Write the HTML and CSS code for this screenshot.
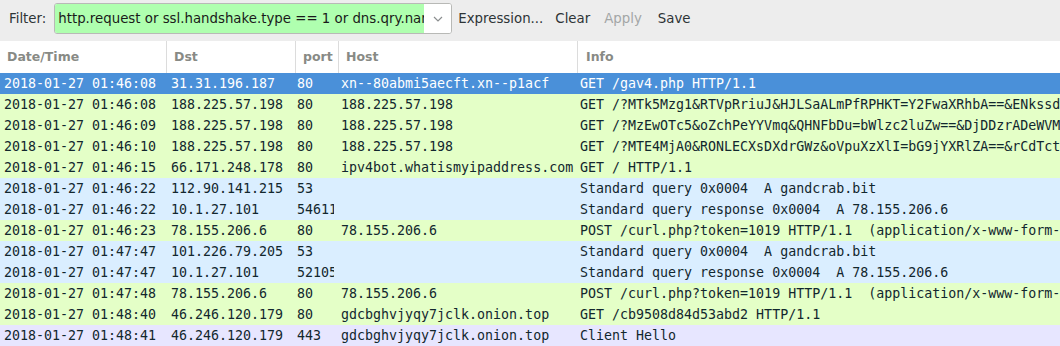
FILE: index.html
```html
<!DOCTYPE html>
<html>
<head>
<meta charset="utf-8">
<link rel="stylesheet" href="styles.css">
</head>
<body>
<div class="toolbar">
  <span class="label">Filter:</span>
  <div class="combo">
    <div class="combo-input">http.request or ssl.handshake.type == 1 or dns.qry.name</div>
    <div class="combo-btn">
      <svg width="10" height="6" viewBox="0 0 10 6"><path d="M1 1 L5 5 L9 1" fill="none" stroke="#8b8e8f" stroke-width="1.2"/></svg>
    </div>
  </div>
  <span class="tbtn b-expr">Expression...</span>
  <span class="tbtn b-clear">Clear</span>
  <span class="tbtn b-apply disabled">Apply</span>
  <span class="tbtn b-save">Save</span>
</div>
<div class="list">
  <div class="header">
    <div class="hc c-date">Date/Time</div>
    <div class="hc c-dst">Dst</div>
    <div class="hc c-port">port</div>
    <div class="hc c-host">Host</div>
    <div class="hc c-info">Info</div>
  </div>
  <div class="row sel"><div class="c c-date">2018-01-27 01:46:08</div><div class="c c-dst">31.31.196.187</div><div class="c c-port">80</div><div class="c c-host">xn--80abmi5aecft.xn--p1acf</div><div class="c c-info">GET /gav4.php HTTP/1.1</div></div>
  <div class="row http"><div class="c c-date">2018-01-27 01:46:08</div><div class="c c-dst">188.225.57.198</div><div class="c c-port">80</div><div class="c c-host">188.225.57.198</div><div class="c c-info">GET /?MTk5Mzg1&amp;RTVpRriuJ&amp;HJLSaALmPfRPHKT=Y2FwaXRhbA==&amp;ENkssdHdN</div></div>
  <div class="row http"><div class="c c-date">2018-01-27 01:46:09</div><div class="c c-dst">188.225.57.198</div><div class="c c-port">80</div><div class="c c-host">188.225.57.198</div><div class="c c-info">GET /?MzEwOTc5&amp;oZchPeYYVmq&amp;QHNFbDu=bWlzc2luZw==&amp;DjDDzrADeWVMxQ</div></div>
  <div class="row http"><div class="c c-date">2018-01-27 01:46:10</div><div class="c c-dst">188.225.57.198</div><div class="c c-port">80</div><div class="c c-host">188.225.57.198</div><div class="c c-info">GET /?MTE4MjA0&amp;RONLECXsDXdrGWz&amp;oVpuXzXlI=bG9jYXRlZA==&amp;rCdTctvBj</div></div>
  <div class="row http"><div class="c c-date">2018-01-27 01:46:15</div><div class="c c-dst">66.171.248.178</div><div class="c c-port">80</div><div class="c c-host">ipv4bot.whatismyipaddress.com</div><div class="c c-info">GET / HTTP/1.1</div></div>
  <div class="row udp"><div class="c c-date">2018-01-27 01:46:22</div><div class="c c-dst">112.90.141.215</div><div class="c c-port">53</div><div class="c c-host"></div><div class="c c-info">Standard query 0x0004  A gandcrab.bit</div></div>
  <div class="row udp"><div class="c c-date">2018-01-27 01:46:22</div><div class="c c-dst">10.1.27.101</div><div class="c c-port">54611</div><div class="c c-host"></div><div class="c c-info">Standard query response 0x0004  A 78.155.206.6</div></div>
  <div class="row http"><div class="c c-date">2018-01-27 01:46:23</div><div class="c c-dst">78.155.206.6</div><div class="c c-port">80</div><div class="c c-host">78.155.206.6</div><div class="c c-info">POST /curl.php?token=1019 HTTP/1.1  (application/x-www-form-urlencoded)</div></div>
  <div class="row udp"><div class="c c-date">2018-01-27 01:47:47</div><div class="c c-dst">101.226.79.205</div><div class="c c-port">53</div><div class="c c-host"></div><div class="c c-info">Standard query 0x0004  A gandcrab.bit</div></div>
  <div class="row udp"><div class="c c-date">2018-01-27 01:47:47</div><div class="c c-dst">10.1.27.101</div><div class="c c-port">52105</div><div class="c c-host"></div><div class="c c-info">Standard query response 0x0004  A 78.155.206.6</div></div>
  <div class="row http"><div class="c c-date">2018-01-27 01:47:48</div><div class="c c-dst">78.155.206.6</div><div class="c c-port">80</div><div class="c c-host">78.155.206.6</div><div class="c c-info">POST /curl.php?token=1019 HTTP/1.1  (application/x-www-form-urlencoded)</div></div>
  <div class="row http"><div class="c c-date">2018-01-27 01:48:40</div><div class="c c-dst">46.246.120.179</div><div class="c c-port">80</div><div class="c c-host">gdcbghvjyqy7jclk.onion.top</div><div class="c c-info">GET /cb9508d84d53abd2 HTTP/1.1</div></div>
  <div class="row tcp"><div class="c c-date">2018-01-27 01:48:41</div><div class="c c-dst">46.246.120.179</div><div class="c c-port">443</div><div class="c c-host">gdcbghvjyqy7jclk.onion.top</div><div class="c c-info">Client Hello</div></div>
</div>
</body>
</html>
```
FILE: styles.css
```css
html, body {
  margin: 0;
  padding: 0;
  background: #ffffff;
  overflow: hidden;
}
body {
  width: 1060px;
  height: 346px;
  font-family: "DejaVu Sans", sans-serif;
  font-size: 13.33px;
  color: #2e3436;
}
.toolbar {
  height: 41px;
  box-sizing: border-box;
  background: #ededed;
  display: flex;
  align-items: flex-start;
  padding: 3px 0 0 9px;
}
.label {
  line-height: 31px;
}
.combo {
  margin-left: 8px;
  width: 398px;
  height: 31px;
  box-sizing: border-box;
  border: 1px solid #b8b9b6;
  border-radius: 3px;
  display: flex;
  overflow: hidden;
  background: #fff;
}
.combo-input {
  width: 369px;
  background: #afffaf;
  line-height: 29px;
  padding-left: 3px;
  box-sizing: border-box;
  white-space: nowrap;
  overflow: hidden;
  color: #1a1a1a;
}
.combo-btn {
  flex: 1;
  display: flex;
  align-items: center;
  justify-content: center;
  background: #ffffff;
}
.tbtn {
  line-height: 31px;
  color: #2e3436;
}
.b-expr { margin-left: 6px; }
.b-clear { margin-left: 12px; }
.b-apply { margin-left: 14px; }
.b-save { margin-left: 16px; }
.disabled { color: #a3a6a6; }

.list {
  background: #fff;
}
.header {
  height: 32px;
  display: flex;
  background: #fff;
}
.hc {
  box-sizing: border-box;
  font-weight: bold;
  font-size: 12.5px;
  color: #888a85;
  line-height: 32px;
  padding-left: 7px;
  border-right: 1px solid #dcdcdc;
  white-space: nowrap;
  overflow: hidden;
}
.hc.c-info { border-right: none; padding-left: 8px; }
.hc.c-date { padding-left: 7px; }

.c-date { width: 167px; flex: none; }
.c-dst { width: 129px; flex: none; }
.c-port { width: 43px; flex: none; }
.c-host { width: 239px; flex: none; }
.c-info { flex: 1; min-width: 0; }

.row {
  height: 21px;
  display: flex;
  font-family: "DejaVu Sans Mono", monospace;
  font-size: 13.3px;
  color: #12272e;
}
.c {
  box-sizing: border-box;
  line-height: 21px;
  white-space: pre;
  overflow: hidden;
}
.row .c-date { padding-left: 4px; }
.row .c-dst { padding-left: 4px; }
.row .c-port { padding-left: 1px; width: 38px; margin-right: 5px; }
.row .c-host { padding-left: 2px; }
.row .c-info { padding-left: 2px; }

.sel { background: #4a90d9; color: #ffffff; }
.http { background: #e4ffc7; }
.udp { background: #daeeff; }
.tcp { background: #e7e6ff; }
```
